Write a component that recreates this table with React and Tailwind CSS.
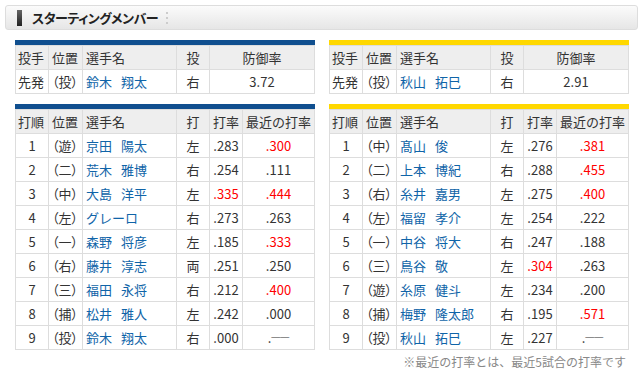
import React from "react";

const BLUE = "bg-[#104f8f]";
const YELLOW = "bg-[#ffd800]";

const leftPitcher = { role: "先発", pos: "投", name: ["鈴木", "翔太"], hand: "右", era: "3.72" };
const rightPitcher = { role: "先発", pos: "投", name: ["秋山", "拓巳"], hand: "右", era: "2.91" };

const leftLineup = [
  [1, "遊", ["京田", "陽太"], "左", ".283", false, ".300", true],
  [2, "二", ["荒木", "雅博"], "右", ".254", false, ".111", false],
  [3, "中", ["大島", "洋平"], "左", ".335", true, ".444", true],
  [4, "左", ["グレーロ"], "右", ".273", false, ".263", false],
  [5, "一", ["森野", "将彦"], "左", ".185", false, ".333", true],
  [6, "右", ["藤井", "淳志"], "両", ".251", false, ".250", false],
  [7, "三", ["福田", "永将"], "右", ".212", false, ".400", true],
  [8, "捕", ["松井", "雅人"], "左", ".242", false, ".000", false],
  [9, "投", ["鈴木", "翔太"], "右", ".000", false, null, false],
];

const rightLineup = [
  [1, "中", ["髙山", "俊"], "左", ".276", false, ".381", true],
  [2, "二", ["上本", "博紀"], "右", ".288", false, ".455", true],
  [3, "右", ["糸井", "嘉男"], "左", ".275", false, ".400", true],
  [4, "左", ["福留", "孝介"], "左", ".254", false, ".222", false],
  [5, "一", ["中谷", "将大"], "右", ".247", false, ".188", false],
  [6, "三", ["鳥谷", "敬"], "左", ".304", true, ".263", false],
  [7, "遊", ["糸原", "健斗"], "左", ".234", false, ".200", false],
  [8, "捕", ["梅野", "隆太郎"], "右", ".195", false, ".571", true],
  [9, "投", ["秋山", "拓巳"], "左", ".227", false, null, false],
];

const cell = "h-[24px] border-r border-b border-[#ddd] flex items-center whitespace-nowrap";
const head = cell + " bg-[#eee]";

function Name({ parts }) {
  if (parts.length === 1) return <span className="text-[#0f64a8]">{parts[0]}</span>;
  return (
    <span className="text-[#0f64a8]">
      {parts[0]}
      <span className="tracking-[-4px]">　</span>
      {parts[1]}
    </span>
  );
}

function Pos({ p }) {
  return <span className="[font-feature-settings:'palt']">（{p}）</span>;
}

function Dash() {
  return (
    <span>
      .<span className="relative -top-[3px] font-['Liberation_Sans',sans-serif] text-[9px]">——</span>
    </span>
  );
}

function PitcherTable({ p, bar }) {
  return (
    <div>
      <div className={`h-[5px] ${bar}`} />
      <div className="grid grid-cols-[33px_34px_94px_33px_105px] border-l border-t border-[#ddd]">
        <div className={head + " pl-[2px]"}>投手</div>
        <div className={head + " pl-[3px]"}>位置</div>
        <div className={head + " pl-[3px]"}>選手名</div>
        <div className={head + " justify-center"}>投</div>
        <div className={head + " justify-center"}>防御率</div>
        <div className={cell + " pl-[2px]"}>{p.role}</div>
        <div className={cell + " pl-[3px]"}><Pos p={p.pos} /></div>
        <div className={cell + " pl-[3px]"}><Name parts={p.name} /></div>
        <div className={cell + " justify-center"}>{p.hand}</div>
        <div className={cell + " justify-center"}>{p.era}</div>
      </div>
    </div>
  );
}

function LineupTable({ rows, bar }) {
  return (
    <div className="mt-[10px]">
      <div className={`h-[5px] ${bar}`} />
      <div className="grid grid-cols-[33px_34px_94px_33px_33px_72px] border-l border-t border-[#ddd]">
        <div className={head + " pl-[2px]"}>打順</div>
        <div className={head + " pl-[3px]"}>位置</div>
        <div className={head + " pl-[3px]"}>選手名</div>
        <div className={head + " justify-center"}>打</div>
        <div className={head + " justify-center"}>打率</div>
        <div className={head + " justify-center"}>最近の打率</div>
        {rows.map((r) => (
          <React.Fragment key={r[0]}>
            <div className={cell + " justify-center"}>{r[0]}</div>
            <div className={cell + " pl-[3px]"}><Pos p={r[1]} /></div>
            <div className={cell + " pl-[3px]"}><Name parts={r[2]} /></div>
            <div className={cell + " justify-center"}>{r[3]}</div>
            <div className={cell + " justify-center " + (r[5] ? "text-[#ff0000]" : "")}>{r[4]}</div>
            <div className={cell + " justify-center " + (r[7] ? "text-[#ff0000]" : "")}>
              {r[6] === null ? <Dash /> : r[6]}
            </div>
          </React.Fragment>
        ))}
      </div>
    </div>
  );
}

export default function App() {
  return (
    <div className="w-[644px] h-[381px] bg-white pt-[5px] text-[13px] leading-none text-[#333] font-['Noto_Sans_CJK_JP','Noto_Sans',sans-serif]">
      <div className="ml-[5px] w-[633px] h-[25px] border border-[#ddd] rounded-[3px] bg-gradient-to-b from-[#fbfbfb] to-[#e6e6e6] flex items-center pl-[11px]">
        <div className="w-[5px] h-[16px] bg-gradient-to-b from-[#666] to-[#222]" />
        <span className="ml-[10px] text-[13px] font-bold tracking-[-0.5px] text-[#222] [font-feature-settings:'palt']">スターティングメンバー</span>
        <div className="ml-[8px] flex flex-col gap-[3px]">
          <div className="w-[2px] h-[2px] bg-[#ccc]" />
          <div className="w-[2px] h-[2px] bg-[#ccc]" />
          <div className="w-[2px] h-[2px] bg-[#ccc]" />
        </div>
      </div>
      <div className="flex gap-[14px] pl-[15px] mt-[10px]">
        <div className="w-[300px]">
          <PitcherTable p={leftPitcher} bar={BLUE} />
          <LineupTable rows={leftLineup} bar={BLUE} />
        </div>
        <div className="w-[300px]">
          <PitcherTable p={rightPitcher} bar={YELLOW} />
          <LineupTable rows={rightLineup} bar={YELLOW} />
          <div className="mt-[4px] text-right text-[12px] leading-[16px] text-[#888] pr-[3px]">※最近の打率とは、最近5試合の打率です</div>
        </div>
      </div>
    </div>
  );
}
